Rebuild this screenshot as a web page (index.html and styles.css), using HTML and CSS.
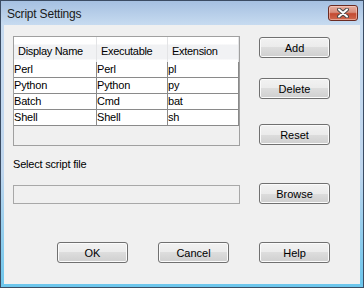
FILE: index.html
```html
<!DOCTYPE html>
<html lang="en">
<head>
    <meta charset="UTF-8">
    <meta name="viewport" content="width=device-width, initial-scale=1.0">
    <title>Script Settings</title>
    <link rel="stylesheet" href="styles.css">
</head>
<body>
    <div class="window">
        <div class="titlebar">
            <span class="title">Script Settings</span>
            <div class="close">
                <svg width="12" height="10" viewBox="0 0 12 10">
                    <path d="M2 1.5 L10 8.5 M10 1.5 L2 8.5" stroke="#4a4a4a" stroke-width="4" stroke-linecap="round"/>
                    <path d="M2 1.5 L10 8.5 M10 1.5 L2 8.5" stroke="#ffffff" stroke-width="2" stroke-linecap="round"/>
                </svg>
            </div>
        </div>

        <div class="client">
            <div class="top">
                <div class="grid">
                    <div class="head">
                        <div class="hcell c1">Display Name</div>
                        <div class="hcell c2">Executable</div>
                        <div class="hcell c3">Extension</div>
                    </div>
                    <div class="row">
                        <div class="cell c1">Perl</div>
                        <div class="cell c2">Perl</div>
                        <div class="cell c3">pl</div>
                    </div>
                    <div class="row">
                        <div class="cell c1">Python</div>
                        <div class="cell c2">Python</div>
                        <div class="cell c3">py</div>
                    </div>
                    <div class="row">
                        <div class="cell c1">Batch</div>
                        <div class="cell c2">Cmd</div>
                        <div class="cell c3">bat</div>
                    </div>
                    <div class="row">
                        <div class="cell c1">Shell</div>
                        <div class="cell c2">Shell</div>
                        <div class="cell c3">sh</div>
                    </div>
                </div>
                <div class="side">
                    <button class="btn add">Add</button>
                    <button class="btn delete">Delete</button>
                    <button class="btn reset">Reset</button>
                </div>
            </div>

            <div class="label">Select script file</div>
            <div class="file-row">
                <input class="path" type="text" disabled>
                <button class="btn">Browse</button>
            </div>

            <div class="actions">
                <button class="btn">OK</button>
                <button class="btn">Cancel</button>
                <button class="btn">Help</button>
            </div>
        </div>
    </div>
</body>
</html>
```

FILE: styles.css
```css
html, body {
    margin: 0;
    padding: 0;
}

body {
    font-family: 'Liberation Sans', Arial, sans-serif;
    font-size: 11px;
    color: #000;
    background: #f0f0f0;
}

.window {
    width: 364px;
    height: 288px;
    box-sizing: border-box;
    border: 1px solid #3b4c63;
    background: linear-gradient(#a5c0e1 0, #c7dbf0 24px, #bfd6ee 60%, #6cc6ec 100%);
    display: flex;
    flex-direction: column;
}

.titlebar {
    height: 24px;
    display: flex;
    justify-content: space-between;
    align-items: flex-start;
}

.title {
    font-size: 12px;
    letter-spacing: -0.2px;
    color: #1a1a1a;
    padding-left: 6px;
    line-height: 14px;
    margin-top: 6px;
}

.close {
    width: 30px;
    height: 16px;
    box-sizing: border-box;
    margin: 4px 5px 0 0;
    border: 1px solid #6b2b22;
    border-radius: 3px;
    background: linear-gradient(#e6ad9f 0, #d88d7b 45%, #c44a31 55%, #cf6a50 100%);
    box-shadow: inset 0 0 0 1px rgba(255, 220, 210, 0.5);
    display: flex;
    align-items: center;
    justify-content: center;
}

/* client area of the dialog */
.client {
    flex: 1;
    margin: 0 3px 3px 3px;
    background: #f0f0f0;
    padding: 11px 0 0 9px;
}

.top {
    display: flex;
    gap: 19px;
}

.grid {
    width: 227px;
    height: 110px;
    box-sizing: border-box;
    border: 1px solid #a0a0a0;
    background: #f0f0f0;
}

.head {
    display: flex;
    height: 25px;
    background: linear-gradient(#ffffff 0, #ffffff 7px, #f1f2f4 8px, #f1f2f4 22px, #ffffff 23px);
}

.hcell {
    box-sizing: border-box;
    padding: 2px 0 0 4px;
    display: flex;
    align-items: center;
    border-right: 1px solid #e3e4e6;
    color: #000;
    letter-spacing: -0.3px;
}

.row {
    display: flex;
    height: 16px;
}

.cell {
    box-sizing: border-box;
    height: 16px;
    line-height: 15px;
    background: #fff;
    border-right: 1px solid #8a8a8a;
    border-bottom: 1px solid #8a8a8a;
    letter-spacing: -0.2px;
    white-space: nowrap;
    overflow: hidden;
}

.c1 { width: 83px; }
.c2 { width: 71px; }
.c3 { width: 71px; }

.side {
    display: flex;
    flex-direction: column;
    padding-top: 1px;
}

.btn {
    width: 71px;
    height: 21px;
    box-sizing: border-box;
    padding: 0;
    border: 1px solid #707070;
    border-radius: 3px;
    background: linear-gradient(#f2f2f2 0, #ebebeb 50%, #dddddd 50%, #cfcfcf 100%);
    box-shadow: inset 0 0 0 1px #fbfbfb;
    font-family: 'Liberation Sans', Arial, sans-serif;
    font-size: 11px;
    color: #000;
}

.delete { margin-top: 20px; }
.reset { margin-top: 25px; }

.label {
    margin-top: 12px;
    line-height: 13px;
    letter-spacing: -0.2px;
}

.file-row {
    display: flex;
    align-items: flex-start;
    gap: 19px;
    margin-top: 12px;
}

.path {
    width: 227px;
    height: 19px;
    box-sizing: border-box;
    margin: 2px 0 0 0;
    border: 1px solid #a8a8a8;
    background: #f0f0f0;
    padding: 0;
}

.actions {
    display: flex;
    gap: 30px;
    margin-top: 38px;
    padding-left: 44px;
}
```
